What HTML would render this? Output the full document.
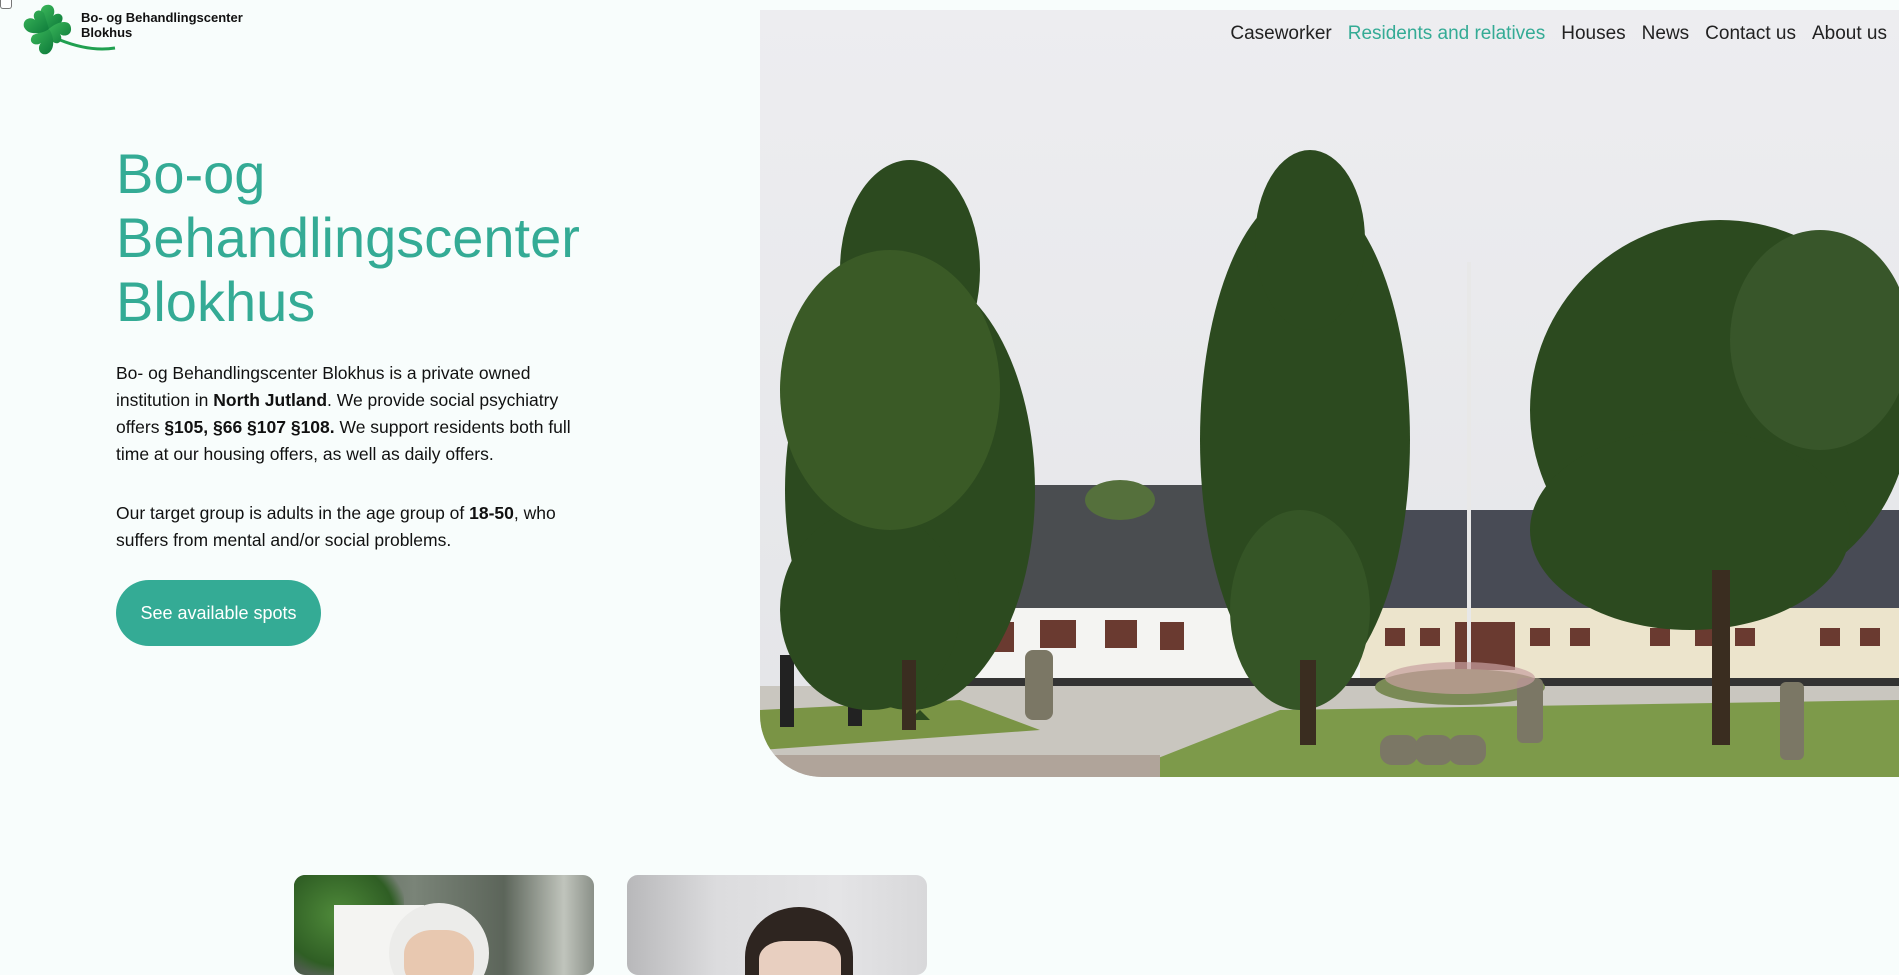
<!DOCTYPE html>
<html><head><meta charset="utf-8"><style>
*{margin:0;padding:0;box-sizing:border-box}
html,body{width:1899px;height:956px;overflow:hidden;background:#f8fdfc;font-family:"Liberation Sans",Arial,sans-serif;color:#111}
.cb{position:absolute;left:0;top:0;width:12px;height:9px;border:1px solid #777;border-top:none;border-radius:0 0 3px 3px;background:#fff}
.logo{position:absolute;left:20px;top:2px}
.logotext{position:absolute;left:81px;top:10px;font-size:13px;font-weight:bold;line-height:15px;color:#111}
.hero{position:absolute;left:760px;top:10px;width:1139px;height:767px;border-bottom-left-radius:62px;overflow:hidden}
nav{position:absolute;top:13px;right:12px;font-size:19px;color:#222;display:flex;gap:16px}
nav span.a{color:#34ab95}
h1{position:absolute;left:116px;top:142px;font-weight:normal;font-size:56px;line-height:64px;color:#34ab95}
.p{position:absolute;left:116px;width:480px;font-size:17.5px;line-height:27px;color:#111}
.btn{position:absolute;left:116px;top:580px;width:205px;height:66px;border-radius:33px;background:#34ab95;color:#fff;font-size:18px;display:flex;align-items:center;justify-content:center}
.card{position:absolute;top:875px;width:300px;height:100px;border-radius:11px;overflow:hidden}
</style></head><body>
<div class="cb"></div>
<svg class="logo" width="100" height="56" viewBox="0 0 100 56">
<defs><linearGradient id="g" x1="0" y1="0" x2="1" y2="1"><stop offset="0" stop-color="#3bb75a"/><stop offset="1" stop-color="#0d7a3a"/></linearGradient></defs>
<path d="M40 38 Q70 50 95 46" stroke="#20a050" stroke-width="3" fill="none"/>
<g fill="url(#g)">
<path d="M29 27 C22 20 16 6 26 3 C34 1 36 10 33 14 C38 9 46 13 41 21 Z"/>
<path d="M29 27 C36 20 50 16 51 26 C52 34 43 35 40 32 C44 38 38 45 32 39 Z"/>
<path d="M29 27 C34 34 36 48 27 52 C19 54 17 45 21 41 C15 45 7 40 13 33 Z"/>
<path d="M29 27 C22 32 8 34 4 25 C2 17 11 14 15 18 C11 11 18 5 24 11 Z"/>
</g></svg>
<div class="logotext">Bo- og Behandlingscenter<br>Blokhus</div>

<div class="hero">
<svg width="1139" height="767" viewBox="0 0 1139 767">
<defs><linearGradient id="sky" x1="0" y1="0" x2="0" y2="1"><stop offset="0" stop-color="#ededf0"/><stop offset="1" stop-color="#e4e5e8"/></linearGradient></defs>
<rect width="1139" height="767" fill="url(#sky)"/>
<polygon points="160,530 260,475 470,475 560,530 560,600 160,600" fill="#4a4d50"/>
<polygon points="600,600 640,500 1139,500 1139,600" fill="#484b55"/>
<rect x="160" y="598" width="979" height="80" fill="#f4f4f2"/>
<rect x="600" y="598" width="539" height="80" fill="#ece4cc"/>
<rect x="160" y="668" width="979" height="8" fill="#333"/>
<g fill="#6a3a30"><rect x="230" y="612" width="24" height="30"/><rect x="280" y="610" width="36" height="28"/><rect x="345" y="610" width="32" height="28"/><rect x="400" y="612" width="24" height="28"/><rect x="625" y="618" width="20" height="18"/><rect x="660" y="618" width="20" height="18"/><rect x="695" y="612" width="60" height="48"/><rect x="770" y="618" width="20" height="18"/><rect x="810" y="618" width="20" height="18"/><rect x="890" y="618" width="20" height="18"/><rect x="935" y="618" width="20" height="18"/><rect x="975" y="618" width="20" height="18"/><rect x="1060" y="618" width="20" height="18"/><rect x="1100" y="618" width="20" height="18"/></g>
<rect x="707" y="252" width="4" height="410" fill="#e8e8e8"/>
<rect x="0" y="676" width="1139" height="91" fill="#c9c6bf"/>
<polygon points="350,767 520,700 1139,690 1139,767" fill="#7d9a4a"/>
<polygon points="0,700 200,690 280,720 0,740" fill="#7a9445"/>
<rect x="0" y="745" width="400" height="22" fill="#b0a49a"/>
<ellipse cx="700" cy="677" rx="85" ry="18" fill="#7a8a55"/>
<g fill="#7b7765"><rect x="265" y="640" width="28" height="70" rx="8"/><rect x="757" y="668" width="26" height="65" rx="6"/><rect x="1020" y="672" width="24" height="78" rx="6"/><rect x="620" y="725" width="38" height="30" rx="12"/><rect x="655" y="725" width="38" height="30" rx="12"/><rect x="688" y="725" width="38" height="30" rx="12"/></g>
<g fill="#222"><rect x="20" y="645" width="14" height="72"/><rect x="88" y="648" width="14" height="68"/></g>
<g fill="#2c4a1f">
<path d="M150 710 L160 700 L170 710 Z"/>
<ellipse cx="150" cy="480" rx="125" ry="220"/><ellipse cx="150" cy="260" rx="70" ry="110"/><ellipse cx="110" cy="600" rx="90" ry="100"/><ellipse cx="130" cy="380" rx="110" ry="140" fill="#3a5a26"/>
<ellipse cx="545" cy="430" rx="105" ry="250"/><ellipse cx="550" cy="230" rx="55" ry="90"/><ellipse cx="540" cy="600" rx="70" ry="100" fill="#355526"/>
<ellipse cx="960" cy="400" rx="190" ry="190"/><ellipse cx="930" cy="520" rx="160" ry="100"/><ellipse cx="1060" cy="330" rx="90" ry="110" fill="#38562a"/>
<ellipse cx="360" cy="490" rx="35" ry="20" fill="#55703c"/>
</g>
<rect x="142" y="650" width="14" height="70" fill="#3a2d20"/><rect x="540" y="650" width="16" height="85" fill="#3a2d20"/><rect x="952" y="560" width="18" height="175" fill="#3a2d20"/>
<ellipse cx="700" cy="668" rx="75" ry="16" fill="#c8a0a0" opacity=".7"/>
</svg>
<nav><span>Caseworker</span><span class="a">Residents and relatives</span><span>Houses</span><span>News</span><span>Contact us</span><span>About us</span></nav>
</div>

<h1>Bo-og<br>Behandlingscenter<br>Blokhus</h1>
<div class="p" style="top:360px">Bo- og Behandlingscenter Blokhus is a private owned institution in <b>North Jutland</b>. We provide social psychiatry offers <b>§105, §66 §107 §108.</b> We support residents both full time at our housing offers, as well as daily offers.</div>
<div class="p" style="top:500px">Our target group is adults in the age group of <b>18-50</b>, who suffers from mental and/or social problems.</div>
<div class="btn">See available spots</div>

<div class="card" style="left:294px;background:linear-gradient(90deg,#4a5a48 0%,#7a8478 40%,#5c655a 70%,#c0c4bc 90%,#8a9088 100%)">
<div style="position:absolute;left:0;top:0;width:110px;height:100px;background:radial-gradient(ellipse at 40% 40%,#4f8a3a,#2f5e24 60%,transparent 75%)"></div>
<div style="position:absolute;left:40px;top:30px;width:90px;height:70px;background:#f4f4f2"></div>
<div style="position:absolute;left:95px;top:28px;width:100px;height:100px;border-radius:50%;background:#ececea"></div>
<div style="position:absolute;left:110px;top:55px;width:70px;height:60px;border-radius:40%;background:#e8c8b0"></div>
</div>
<div class="card" style="left:627px;background:linear-gradient(90deg,#b8b8ba,#dcdcde 30%,#e4e4e6 70%,#d8d8da)">
<div style="position:absolute;left:118px;top:32px;width:108px;height:100px;border-radius:50% 50% 30% 30%;background:#2e2520"></div>
<div style="position:absolute;left:132px;top:66px;width:82px;height:60px;border-radius:30%;background:#e8cfc0"></div>
</div>
</body></html>
